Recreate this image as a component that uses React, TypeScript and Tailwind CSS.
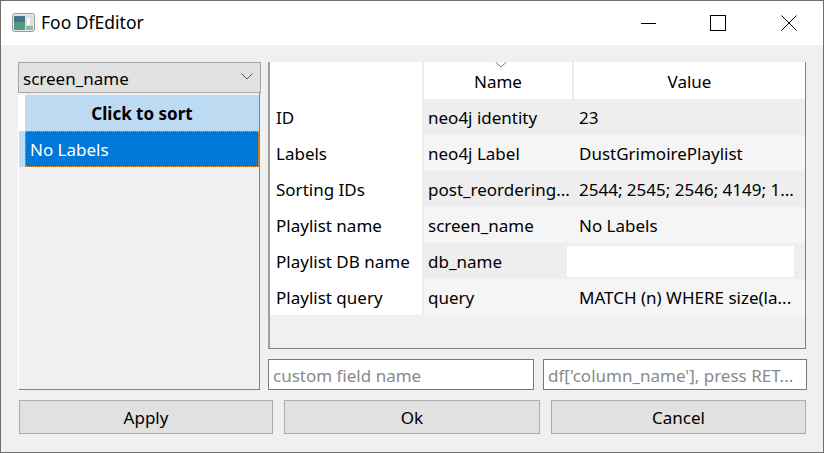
const rows = [
  ["ID", "neo4j identity", "23"],
  ["Labels", "neo4j Label", "DustGrimoirePlaylist"],
  ["Sorting IDs", "post_reordering...", "2544; 2545; 2546; 4149; 1..."],
  ["Playlist name", "screen_name", "No Labels"],
  ["Playlist DB name", "db_name", ""],
  ["Playlist query", "query", "MATCH (n) WHERE size(la..."],
];

function TitleBar() {
  return (
    <div className="flex h-[44px] items-center bg-white pl-[11px]">
      <svg width="23" height="19" viewBox="0 0 23 19" className="mr-[6px] mt-[-1px]">
        <rect x="0.5" y="0.5" width="22" height="18" rx="2" fill="#e6e9ea" stroke="#9a9a9a" />
        <rect x="2" y="2" width="19" height="15" fill="#d9dedf" />
        <rect x="2" y="4" width="11" height="13" fill="#4f9a80" />
        <rect x="2" y="3" width="11" height="6" fill="#47708f" />
        <rect x="15" y="5" width="3" height="7" fill="#f7f7f7" />
        <rect x="14" y="13" width="7" height="4" fill="#8fb6a6" />
      </svg>
      <span className="text-[17.5px] text-black">Foo DfEditor</span>
      <div className="ml-auto flex">
        <div className="flex h-[44px] w-[70px] items-center justify-center">
          <div className="h-[1px] w-[15px] bg-black" />
        </div>
        <div className="flex h-[44px] w-[70px] items-center justify-center">
          <div className="h-[16px] w-[16px] border border-black" />
        </div>
        <div className="flex h-[44px] w-[70px] items-center justify-center">
          <svg width="16" height="16" viewBox="0 0 16 16" className="mr-[-2px]">
            <path d="M0.5 0.5 L15.5 15.5 M15.5 0.5 L0.5 15.5" stroke="#000" strokeWidth="1" fill="none" />
          </svg>
        </div>
      </div>
    </div>
  );
}

function LeftPane() {
  return (
    <div className="flex w-[243px] shrink-0 flex-col">
      <div className="flex h-[31px] items-center justify-between border border-[#a5a5a5] bg-[#e1e1e1] pl-[4px] pr-[7px]">
        <span className="pt-[1px]">screen_name</span>
        <svg width="12" height="7" viewBox="0 0 12 7" className="mt-[-3px]">
          <path d="M0.5 0.5 L6 6 L11.5 0.5" stroke="#555" fill="none" />
        </svg>
      </div>
      <div className="flex h-[297px] w-[242px] flex-col border-r border-b border-l border-[#828282] border-l-white pt-[2px]">
        <div className="flex h-[36px]">
          <div className="w-[6px] bg-white" />
          <div className="flex flex-1 items-center justify-center bg-[#bcdbf3] font-bold">Click to sort</div>
        </div>
        <div className="flex h-[36px]">
          <div className="w-[6px] bg-[#bcdcf4]" />
          <div className="flex flex-1 items-center border border-dotted border-[#f0a040] bg-[#0078d7] pl-[4px] text-white">
            No Labels
          </div>
        </div>
      </div>
    </div>
  );
}

function PropsTable() {
  return (
    <div className="h-[287px] w-[538px] border-r border-b border-l-2 border-[#828282] border-l-[#a0a0a0]">
      <div className="relative flex h-[37px] bg-white">
        <div className="w-[154px] border-r-2 border-[#ececec]" />
        <div className="flex w-[150px] items-center justify-center border-r-2 border-[#ececec] pt-[2px]">Name</div>
        <div className="flex flex-1 items-center justify-center pt-[2px]">Value</div>
        <svg width="12" height="6" viewBox="0 0 12 6" className="absolute left-[225px] top-0">
          <path d="M0.5 0 L6 5 L11.5 0" stroke="#777" fill="none" />
        </svg>
      </div>
      {rows.map((r, i) => (
        <div key={r[0]} className={`flex h-[36px] items-center ${i % 2 === 0 ? "bg-[#eeeeee]" : "bg-[#f5f5f5]"}`}>
          <div className="flex h-full w-[154px] items-center border-r-2 border-[#ececec] bg-white pl-[6px]">{r[0]}</div>
          <div className="w-[150px] whitespace-nowrap pl-[4px]">{r[1]}</div>
          {r[2] === "" ? (
            <div className="ml-[-7px] h-[31px] w-[227px] bg-white" />
          ) : (
            <div className="whitespace-nowrap pl-[5px]">{r[2]}</div>
          )}
        </div>
      ))}
    </div>
  );
}

function Field({ hint, width }: { hint: string; width: string }) {
  return (
    <div className={`flex h-[31px] items-center whitespace-nowrap border border-[#7a7a7a] bg-white pl-[4px] pt-[1px] text-[#8a8a8a] ${width}`}>
      {hint}
    </div>
  );
}

function Btn({ label, width }: { label: string; width: string }) {
  return (
    <div className={`flex h-[34px] items-center justify-center border border-[#adadad] bg-[#e1e1e1] ${width}`}>{label}</div>
  );
}

export default function App() {
  return (
    <div
      className="flex h-[453px] w-[824px] flex-col overflow-hidden border border-[#6e6e6e] bg-[#f0f0f0] text-[17px] leading-none text-black"
      style={{ fontFamily: '"Noto Sans", sans-serif' }}
    >
      <TitleBar />
      <div className="flex flex-1 flex-col px-[17px] pt-[17px]">
        <div className="flex gap-[7px]">
          <LeftPane />
          <div className="flex shrink-0 flex-col gap-[10px]">
            <PropsTable />
            <div className="flex gap-[9px]">
              <Field hint="custom field name" width="w-[266px]" />
              <Field hint="df['column_name'], press RET..." width="w-[264px]" />
            </div>
          </div>
        </div>
        <div className="mt-[10px] flex gap-[11px] pl-[1px]">
          <Btn label="Apply" width="w-[254px]" />
          <Btn label="Ok" width="w-[256px]" />
          <Btn label="Cancel" width="w-[255px]" />
        </div>
      </div>
    </div>
  );
}
